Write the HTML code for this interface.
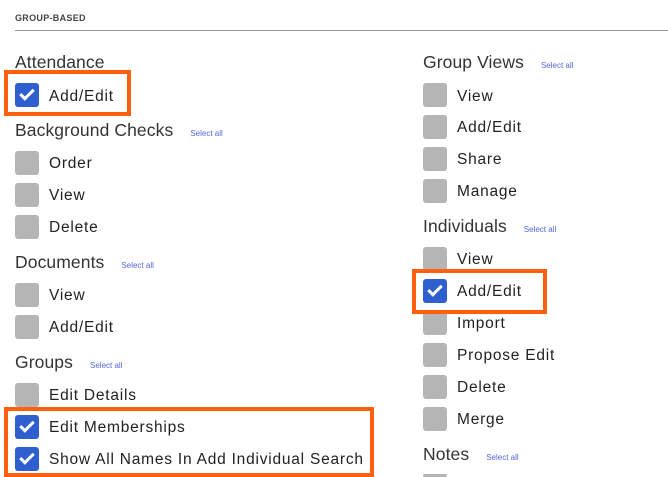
<!DOCTYPE html>
<html style="overflow:hidden;height:477px"><head><style>
body{margin:0;width:668px;height:477px;overflow:hidden;background:#fff;font-family:"Liberation Sans",sans-serif;position:relative;color:#2a2a3a}
.t{position:absolute;white-space:nowrap;line-height:20px}
.h{font-size:17.5px;color:#333;letter-spacing:0.1px}
.i{font-size:15.5px;letter-spacing:0.78px;color:#222}
.s{font-size:8px;color:#5566dd;margin-left:17px;letter-spacing:0}
.c{position:absolute;width:24px;height:24px;border-radius:3px;background:#b5b5b5}
.k{background:#2f5fce}
.k:after{content:"";position:absolute;left:5px;top:6px;width:11px;height:5px;border-left:3px solid #fff;border-bottom:3px solid #fff;transform:rotate(-45deg)}
.o{position:absolute;border:4px solid #ff5f0f;box-sizing:border-box}
</style></head><body>
<div class="t" style="left:15px;top:8px;font-size:9px;font-weight:bold;color:#444;letter-spacing:0.3px">GROUP-BASED</div>
<div style="position:absolute;left:15px;top:30px;width:653px;height:1px;background:#999"></div>

<div class="t h" style="left:15px;top:52px">Attendance</div>
<div class="c k" style="left:15px;top:83px"></div><div class="t i" style="left:49px;top:87px">Add/Edit</div>
<div class="t h" style="left:15px;top:120px">Background Checks<span class="s">Select all</span></div>
<div class="c" style="left:15px;top:151px"></div><div class="t i" style="left:49px;top:154px">Order</div>
<div class="c" style="left:15px;top:183px"></div><div class="t i" style="left:49px;top:186px">View</div>
<div class="c" style="left:15px;top:215px"></div><div class="t i" style="left:49px;top:218px">Delete</div>
<div class="t h" style="left:15px;top:252px">Documents<span class="s">Select all</span></div>
<div class="c" style="left:15px;top:283px"></div><div class="t i" style="left:49px;top:286px">View</div>
<div class="c" style="left:15px;top:315px"></div><div class="t i" style="left:49px;top:318px">Add/Edit</div>
<div class="t h" style="left:15px;top:352px">Groups<span class="s">Select all</span></div>
<div class="c" style="left:15px;top:383px"></div><div class="t i" style="left:49px;top:386px">Edit Details</div>
<div class="c k" style="left:15px;top:415px"></div><div class="t i" style="left:49px;top:418px">Edit Memberships</div>
<div class="c k" style="left:15px;top:447px"></div><div class="t i" style="left:49px;top:450px">Show All Names In Add Individual Search</div>

<div class="t h" style="left:423px;top:52px">Group Views<span class="s">Select all</span></div>
<div class="c" style="left:423px;top:83px"></div><div class="t i" style="left:457px;top:87px">View</div>
<div class="c" style="left:423px;top:115px"></div><div class="t i" style="left:457px;top:118px">Add/Edit</div>
<div class="c" style="left:423px;top:147px"></div><div class="t i" style="left:457px;top:150px">Share</div>
<div class="c" style="left:423px;top:179px"></div><div class="t i" style="left:457px;top:182px">Manage</div>
<div class="t h" style="left:423px;top:216px">Individuals<span class="s">Select all</span></div>
<div class="c" style="left:423px;top:247px"></div><div class="t i" style="left:457px;top:250px">View</div>
<div class="c k" style="left:423px;top:279px"></div><div class="t i" style="left:457px;top:282px">Add/Edit</div>
<div class="c" style="left:423px;top:311px"></div><div class="t i" style="left:457px;top:314px">Import</div>
<div class="c" style="left:423px;top:343px"></div><div class="t i" style="left:457px;top:346px">Propose Edit</div>
<div class="c" style="left:423px;top:375px"></div><div class="t i" style="left:457px;top:378px">Delete</div>
<div class="c" style="left:423px;top:407px"></div><div class="t i" style="left:457px;top:410px">Merge</div>
<div class="t h" style="left:423px;top:444px">Notes<span class="s">Select all</span></div>
<div class="c" style="left:423px;top:474px;height:3px"></div>

<div class="o" style="left:4px;top:70px;width:127px;height:46px"></div>
<div class="o" style="left:412px;top:269px;width:135px;height:45px"></div>
<div class="o" style="left:4px;top:407px;width:370px;height:70px"></div>
</body></html>
